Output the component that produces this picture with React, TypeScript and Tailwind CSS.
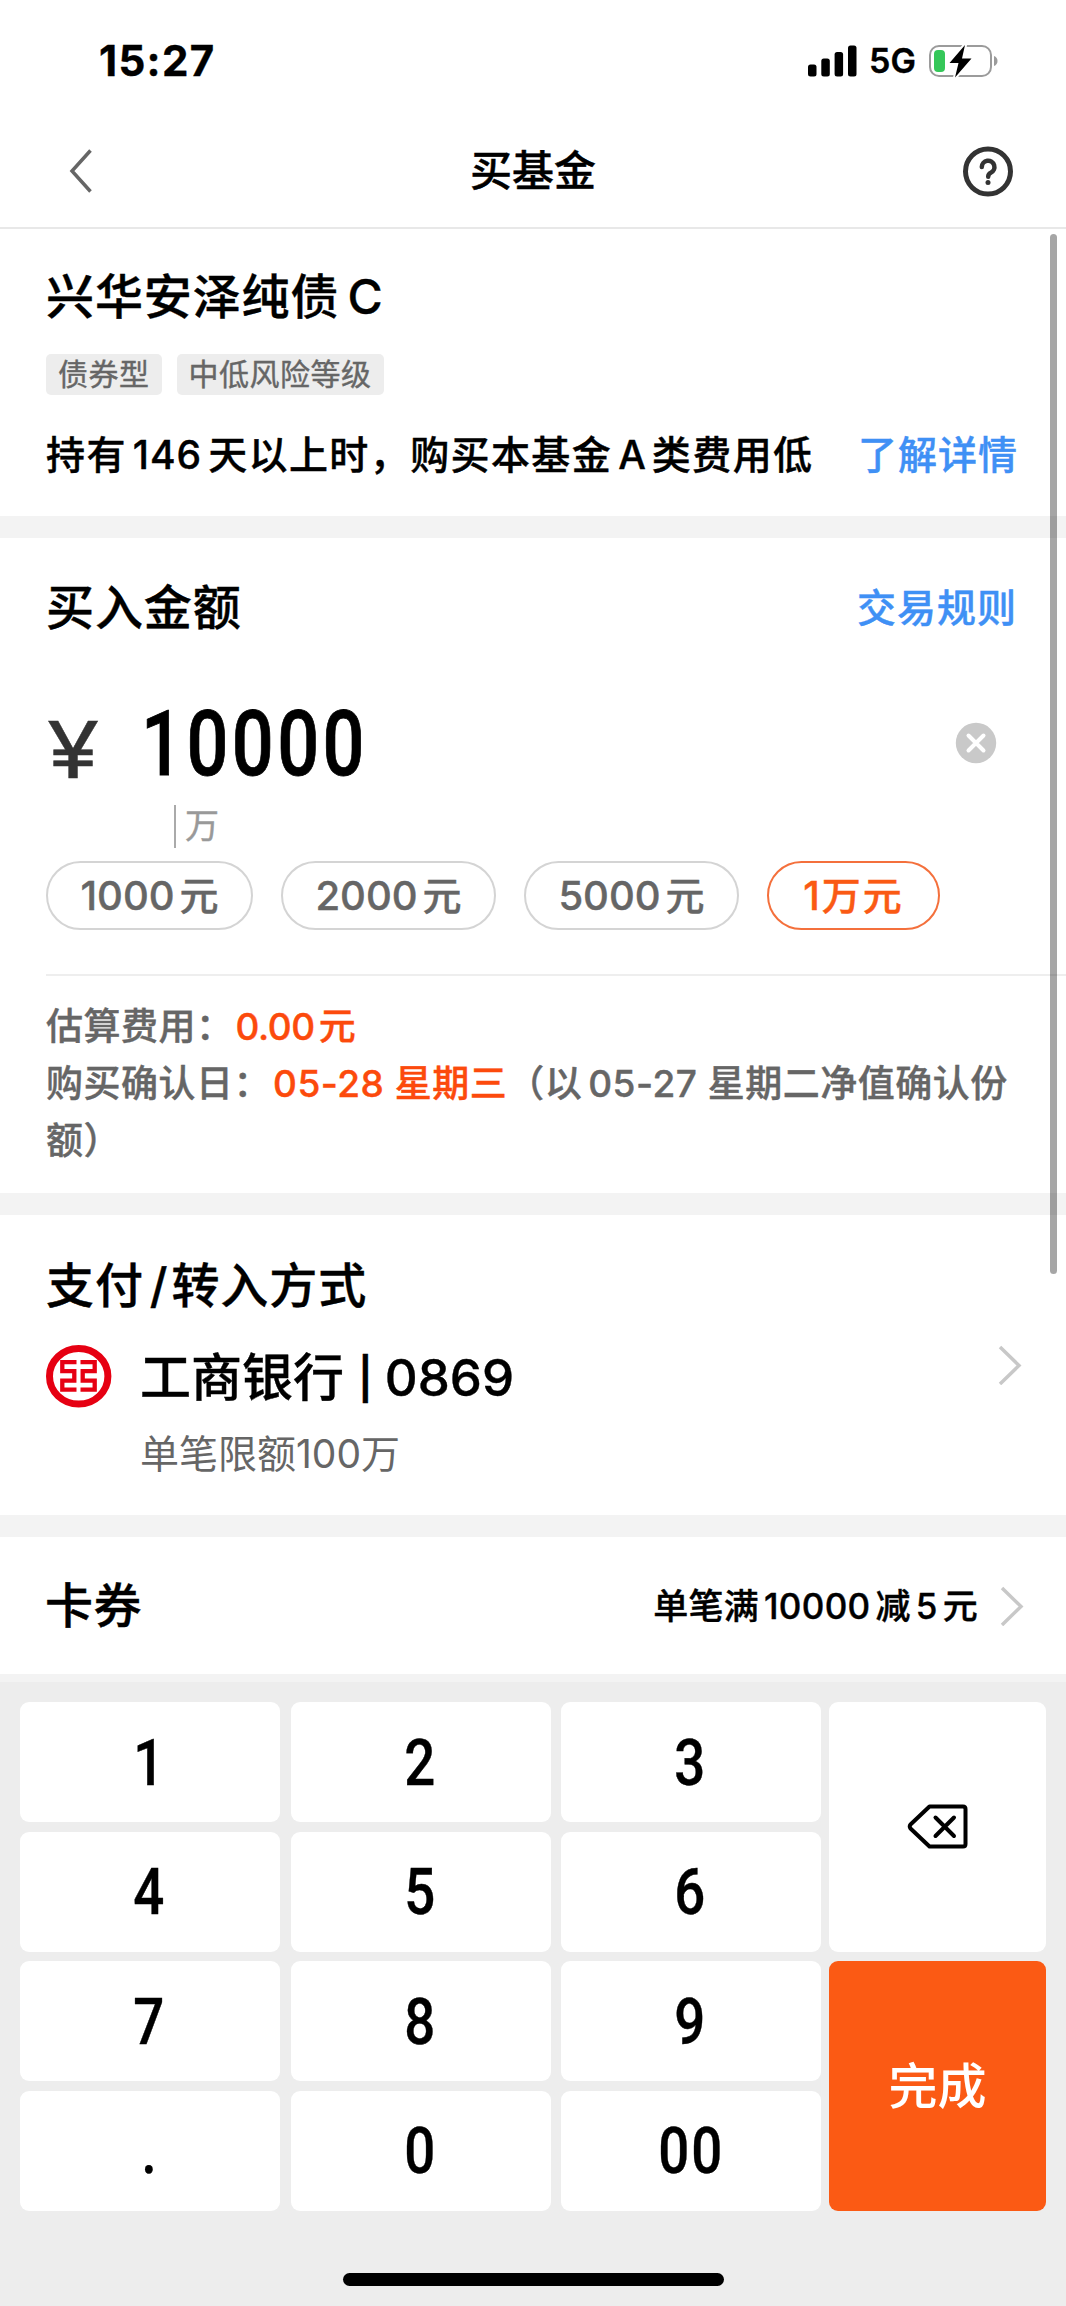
import { useState } from 'react';

const presets = [
  { label: '1000', unit: '元', value: '1000', width: 'w-[207px]' },
  { label: '2000', unit: '元', value: '2000', width: 'w-[215px]' },
  { label: '5000', unit: '元', value: '5000', width: 'w-[215px]' },
  { label: '1', unit: '万元', value: '10000', width: 'w-[173px]' },
];

const keys = ['1', '2', '3', '4', '5', '6', '7', '8', '9', '.', '0', '00'];

function ChevronRight() {
  return (
    <svg width="24" height="40" viewBox="0 0 24 40" fill="none" stroke="#c8c8c8" strokeWidth="3.500">
      <path d="M2 2L21 20.500L2 39" />
    </svg>
  );
}

function StatusBar() {
  return (
    <div className="h-[112px] pt-[9px] pl-[99px] pr-[67px] flex items-center justify-between">
      <span className="text-[42px] leading-[50px] font-bold tracking-[1.3px]">15:27</span>
      <div className="flex items-center">
        <svg width="49" height="32" viewBox="0 0 49 32">
          <rect x="0" y="19.500" width="8.500" height="12" rx="2.500" />
          <rect x="13.300" y="13.500" width="8.500" height="18" rx="2.500" />
          <rect x="26.600" y="7" width="8.500" height="24.500" rx="2.500" />
          <rect x="40" y="0.500" width="8.500" height="31" rx="2.500" />
        </svg>
        <span className="ml-[12px] w-[60px] text-[34px] leading-[40px] font-semibold">5G</span>
        <svg width="70" height="34" viewBox="0 0 70 34">
          <rect x="1" y="2" width="61" height="30" rx="9" fill="none" stroke="#9b9b9b" strokeWidth="2" />
          <path d="M65 12a6 5.500 0 0 1 0 10z" fill="#9b9b9b" />
          <rect x="5" y="6" width="11" height="22" rx="4" fill="#35c759" />
          <path
            d="M36 1L20.500 19h9L26 33.500L42.500 14.500h-9.500z"
            fill="#000"
            stroke="#fff"
            strokeWidth="4"
            strokeLinejoin="round"
            paintOrder="stroke"
          />
        </svg>
      </div>
    </div>
  );
}

function Header() {
  return (
    <div className="h-[117px] pt-[3px] px-[52px] flex items-center justify-between border-b-2 border-[#e8e8e8]">
      <svg width="52" height="44" viewBox="0 0 52 44" fill="none" stroke="#666" strokeWidth="3.500">
        <path d="M38.500 1.500L20 22L38.500 42.500" />
      </svg>
      <h1 className="text-[42px] leading-[56px] font-medium">买基金</h1>
      <svg width="52" height="52" viewBox="0 0 52 52" fill="none" stroke="#333" strokeLinecap="round">
        <circle cx="26" cy="26.500" r="22.500" strokeWidth="5" />
        <path d="M19.800 22a6.300 6.300 0 1 1 9 5.700q-2.600 1.300-2.600 4" strokeWidth="4.500" />
        <circle cx="26" cy="37.500" r="2.500" fill="#333" stroke="none" />
      </svg>
    </div>
  );
}

function BankLogo() {
  return (
    <svg width="66" height="64" viewBox="0 0 66 64" fill="none" stroke="#e60012">
      <ellipse cx="32.700" cy="31.300" rx="29.200" ry="27.800" strokeWidth="7" />
      <g strokeWidth="4.300">
        <path d="M30.500 17.200H16.300V26.200H28.300V35.700H16.300V44.700H30.500" />
        <path d="M34.500 17.200H48.700V26.200H36.700V35.700H48.700V44.700H34.500" />
      </g>
    </svg>
  );
}

export default function App() {
  const [amount, setAmount] = useState('10000');

  const press = (key: string) => {
    if (key === '.' && amount.includes('.')) return;
    setAmount(amount + key);
  };

  return (
    <div className="relative w-[1066px] h-[2306px] overflow-hidden bg-white text-black font-['Inter','Noto_Sans_CJK_SC',sans-serif] [-webkit-text-stroke-width:0.4px]">
      <StatusBar />
      <Header />

      <section className="h-[287px] pt-[36px] pl-[46px] pr-[50px]">
        <h2 className="text-[48px] leading-[64px] font-medium tracking-[0.9px]">
          兴华安泽纯债<span className="ml-[8px]">C</span>
        </h2>
        <div className="mt-[25px] flex gap-[15px] text-[30px] leading-[41px] text-[#666] tracking-[0.5px]">
          <span className="h-[41px] px-[12px] rounded-[5px] bg-[#ededed]">债券型</span>
          <span className="h-[41px] px-[12px] rounded-[5px] bg-[#ededed]">中低风险等级</span>
        </div>
        <div className="mt-[35px] flex justify-between text-[39px] leading-[50px] font-medium whitespace-nowrap">
          <p className="tracking-[1.4px]">
            持有<span className="mx-[6px] tracking-[1px]">146</span>天以上时，购买本基金
            <span className="mx-[6px] tracking-normal">A</span>类费用低
          </p>
          <a className="-mr-[2px] text-[#3f90f5] tracking-[1px]">了解详情</a>
        </div>
      </section>

      <div className="h-[22px] bg-[#f3f3f3]" />

      <section className="h-[655px] pt-[38px] pl-[46px]">
        <div className="pr-[49px] flex items-center justify-between font-medium">
          <h2 className="text-[48px] leading-[64px] tracking-[0.9px]">买入金额</h2>
          <a className="text-[39px] leading-[50px] text-[#3f90f5] tracking-[1px]">交易规则</a>
        </div>

        <div className="mt-[58px] h-[90px] pr-[69px] flex items-center">
          <span className="w-[95px] pl-[1px] pt-[12px] text-[79px] leading-[90px] text-[#333]">
            <span className="inline-block origin-left scale-x-[1.2]">¥</span>
          </span>
          <span className="flex-1 pt-[3px] font-[Roboto] text-[90px] leading-[90px] font-medium [-webkit-text-stroke-width:0.8px]">
            <span className="inline-block origin-left scale-x-[0.82] tracking-[4.2px]">{amount}</span>
          </span>
          <button onClick={() => setAmount('')}>
            <svg width="42" height="42" viewBox="0 0 42 42">
              <circle cx="21" cy="21" r="20.200" fill="#c9c9c9" />
              <path d="M13.500 13.500L28.500 28.500M28.500 13.500L13.500 28.500" stroke="#fff" strokeWidth="4" strokeLinecap="round" />
            </svg>
          </button>
        </div>

        <div className="mt-[17px] ml-[128px] h-[43px] pl-[9px] border-l-2 border-[#aaa] text-[34px] leading-[41px] text-[#999]">
          万
        </div>

        <div className="mt-[13px] flex gap-[28px]">
          {presets.map((p) => (
            <button
              key={p.value}
              onClick={() => setAmount(p.value)}
              className={`${p.width} h-[69px] rounded-full border-2 flex items-center justify-center text-[39px] leading-[60px] font-medium ${
                amount === p.value ? 'border-[#f4703c] text-[#fa5a14]' : 'border-[#d4d4d4] text-[#666]'
              }`}
            >
              <span className="text-[40px]">{p.label}</span>
              <span className={p.unit === '元' ? 'ml-[5px]' : 'ml-[2px] tracking-[2px]'}>{p.unit}</span>
            </button>
          ))}
        </div>

        <div className="mt-[44px] border-t-2 border-[#eee] pt-[22px] pr-[50px] text-[37px] leading-[57px] font-medium text-[#666] tracking-[0.5px]">
          <p>
            估算费用：
            <span className="ml-[2px] text-[#fc4a0c] tracking-[-0.4px]">
              0.00<span className="ml-[4px]">元</span>
            </span>
          </p>
          <p className="whitespace-nowrap">
            购买确认日：
            <span className="ml-[2px] text-[#fc4a0c]">05-28 星期三</span>
            （以<span className="ml-[6px]">05-27</span> 星期二净值确认份
            <br />
            额）
          </p>
        </div>
      </section>

      <div className="h-[22px] bg-[#f3f3f3]" />

      <section className="h-[300px] pt-[39px] pl-[46px] pr-[44px]">
        <h2 className="text-[48px] leading-[64px] font-medium tracking-[0.9px]">
          支付<span className="ml-[6px] mr-[3px]">/</span>转入方式
        </h2>
        <div className="mt-[27px] flex">
          <BankLogo />
          <div className="ml-[28px] flex-1">
            <p className="pt-[1px] flex text-[51px] leading-[64px] font-medium">
              工商银行<span className="ml-[14px] text-[41px] font-semibold">|</span>
              <span className="ml-[12px]">0869</span>
            </p>
            <p className="mt-[19px] text-[39px] leading-[50px] text-[#666] [-webkit-text-stroke-width:0px]">单笔限额100万</p>
          </div>
          <ChevronRight />
        </div>
      </section>

      <div className="h-[22px] bg-[#f3f3f3]" />

      <section className="h-[137px] pl-[45px] pr-[42px] flex items-center justify-between font-medium">
        <h2 className="text-[48px] leading-[64px] tracking-[0.5px]">卡券</h2>
        <div className="flex items-center">
          <p className="mr-[22px] text-[35px] leading-[50px] tracking-[0.3px]">
            单笔满<span className="mx-[5px]">10000</span>减<span className="mx-[5px]">5</span>元
          </p>
          <ChevronRight />
        </div>
      </section>

      <div className="h-[8px] bg-[#f3f3f3]" />

      <div className="h-[624px] bg-[#ededed] pt-[20px] px-[20px]">
        <div className="flex justify-between">
          <div className="grid grid-cols-[repeat(3,260px)] grid-rows-[repeat(4,120px)] gap-x-[10.5px] gap-y-[9.5px]">
            {keys.map((key) => (
              <button
                key={key}
                onClick={() => press(key)}
                className="rounded-[9px] bg-white pt-[1px] font-[Roboto] text-[65px] leading-[118px] font-medium"
              >
                <span className="inline-block scale-x-[0.84] tracking-[2.2px]">{key}</span>
              </button>
            ))}
          </div>
          <div className="w-[217px] flex flex-col gap-[9.5px]">
            <button
              onClick={() => setAmount(amount.slice(0, -1))}
              className="h-[249.5px] rounded-[9px] bg-white flex items-center justify-center"
            >
              <svg
                width="62"
                height="46"
                viewBox="0 0 62 46"
                fill="none"
                stroke="#000"
                strokeWidth="4"
                strokeLinejoin="round"
                strokeLinecap="round"
              >
                <path d="M22.500 2.500H56Q58.500 2.500 58.500 5V40Q58.500 42.500 56 42.500H22.500L3.500 24.500Q2 22.500 3.500 20.500Z" />
                <path d="M28.500 13.500L47 32M47 13.500L28.500 32" />
              </svg>
            </button>
            <button className="h-[249.5px] pt-[2px] rounded-[9px] bg-[#fb5a14] text-white text-[49px] font-medium [-webkit-text-stroke-width:0px]">
              完成
            </button>
          </div>
        </div>
        <div className="mt-[62px] mx-auto w-[381px] h-[13px] rounded-full bg-black" />
      </div>

      {/* scroll indicator */}
      <div className="absolute top-[234px] right-[9px] w-[7px] h-[1040px] rounded-full bg-black/35" />
    </div>
  );
}
